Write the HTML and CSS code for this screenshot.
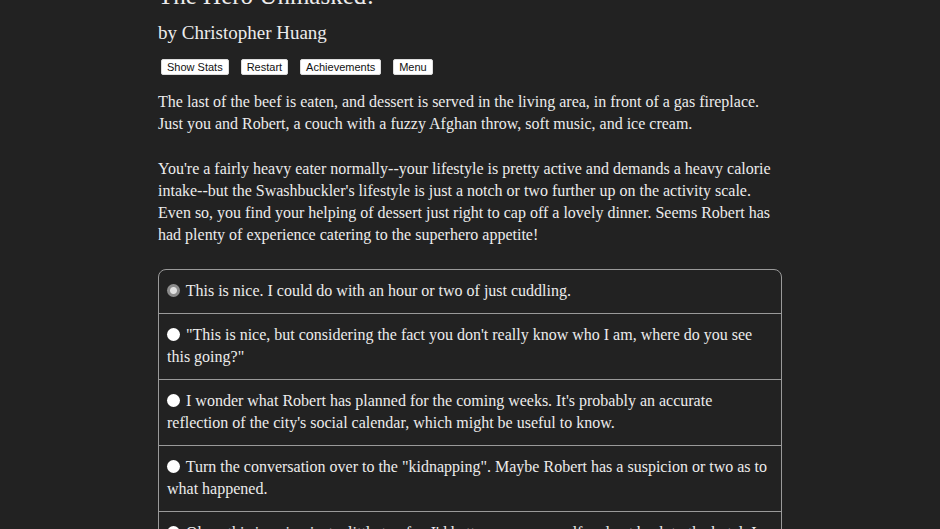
FILE: index.html
```html
<!DOCTYPE html>
<html>
<head>
<meta charset="utf-8">
<link rel="stylesheet" href="styles.css">
</head>
<body>
<div class="page">
  <h1 class="title">The Hero Unmasked!</h1>
  <h2 class="author">by Christopher Huang</h2>
  <div class="buttons">
    <button class="btn">Show Stats</button>
    <button class="btn">Restart</button>
    <button class="btn">Achievements</button>
    <button class="btn">Menu</button>
  </div>
  <p class="para">The last of the beef is eaten, and dessert is served in the living area, in front of a gas fireplace. Just you and Robert, a couch with a fuzzy Afghan throw, soft music, and ice cream.</p>
  <p class="para">You're a fairly heavy eater normally--your lifestyle is pretty active and demands a heavy calorie intake--but the Swashbuckler's lifestyle is just a notch or two further up on the activity scale. Even so, you find your helping of dessert just right to cap off a lovely dinner. Seems Robert has had plenty of experience catering to the superhero appetite!</p>
  <div class="choices">
    <div class="choice"><span class="radio checked"></span> This is nice. I could do with an hour or two of just cuddling.</div>
    <div class="choice"><span class="radio"></span> "This is nice, but considering the fact you don't really know who I am, where do you see this going?"</div>
    <div class="choice"><span class="radio"></span> I wonder what Robert has planned for the coming weeks. It's probably an accurate reflection of the city's social calendar, which might be useful to know.</div>
    <div class="choice"><span class="radio"></span> Turn the conversation over to the "kidnapping". Maybe Robert has a suspicion or two as to what happened.</div>
    <div class="choice"><span class="radio"></span> Okay, this is going just a little too far. I'd better excuse myself and get back to the hotel. I really should get some rest.</div>
  </div>
</div>
</body>
</html>
```
FILE: styles.css
```css
html, body {
  margin: 0;
  padding: 0;
  background: #222222;
  overflow: hidden;
}
.page {
  width: 624px;
  margin: 0 auto;
  color: #ececec;
  font-family: "Liberation Serif", serif;
  font-size: 16px;
  line-height: 22px;
}
.title {
  margin: -21px 0 0 0;
  font-size: 25px;
  line-height: 34px;
  font-weight: normal;
}
.author {
  margin: 7px 0 0 0;
  font-size: 19px;
  line-height: 26px;
  font-weight: normal;
}
.buttons {
  display: flex;
  gap: 12px;
  margin: 13px 0 0 3px;
}
.btn {
  font-family: "Liberation Sans", sans-serif;
  font-size: 11px;
  line-height: 12px;
  padding: 1px 5px;
  background: #ffffff;
  color: #111;
  border: 1px solid #ddd;
  border-radius: 2px;
  margin: 0;
}
.para {
  margin: 16px 0 23px 0;
}
.para + .para {
  margin-top: 0;
}
.choices {
  border: 1px solid #9a9a9a;
  border-radius: 8px;
  overflow: hidden;
}
.choice {
  padding: 10px 8px 11px 8px;
  border-top: 1px solid #9a9a9a;
}
.choice:first-child {
  border-top: none;
}
.radio {
  display: inline-block;
  width: 13px;
  height: 13px;
  border-radius: 50%;
  background: #ffffff;
  vertical-align: -1px;
  margin-right: 2px;
}
.radio.checked {
  background: radial-gradient(circle, #e0e0e0 0 3px, #8c8c8c 4px);
}
```
